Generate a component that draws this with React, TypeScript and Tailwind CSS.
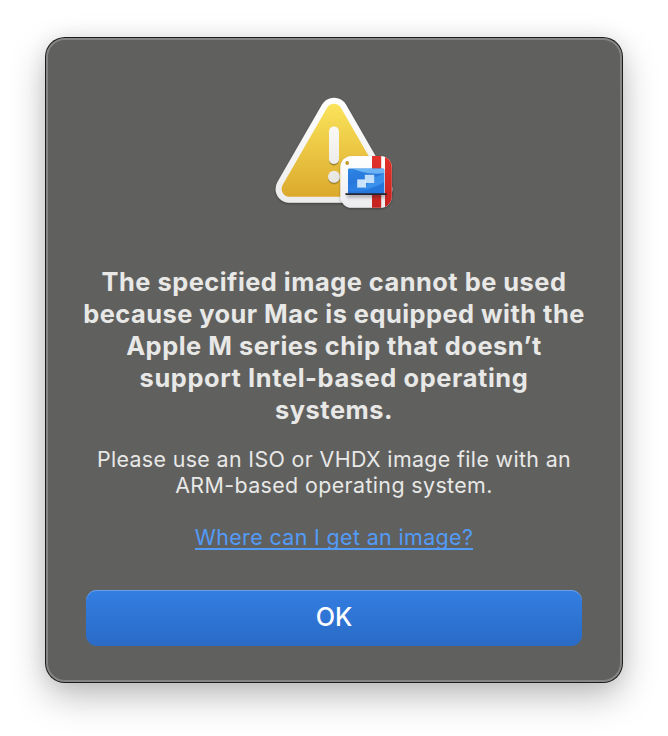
function WarningIcon() {
  return (
    <svg width="128" height="128" viewBox="270 88 128 128" className="block" aria-hidden="true">
      <defs>
        <linearGradient id="yellow" gradientUnits="userSpaceOnUse" x1="0" y1="103" x2="0" y2="197">
          <stop offset="0" stopColor="#fbe45b" />
          <stop offset="1" stopColor="#dba92c" />
        </linearGradient>
        <linearGradient id="rim" gradientUnits="userSpaceOnUse" x1="0" y1="97" x2="0" y2="203">
          <stop offset="0" stopColor="#ffffff" />
          <stop offset="1" stopColor="#ececec" />
        </linearGradient>
        <linearGradient id="mark" gradientUnits="userSpaceOnUse" x1="0" y1="126" x2="0" y2="183">
          <stop offset="0" stopColor="#f9f9f7" />
          <stop offset="1" stopColor="#e8e6e1" />
        </linearGradient>
        <linearGradient id="badge" x1="0" y1="0" x2="0" y2="1">
          <stop offset="0" stopColor="#ffffff" />
          <stop offset="1" stopColor="#ececef" />
        </linearGradient>
        <linearGradient id="red" x1="0" y1="0" x2="0" y2="1">
          <stop offset="0" stopColor="#e2322c" />
          <stop offset="1" stopColor="#c52320" />
        </linearGradient>
        <linearGradient id="screen" x1="0" y1="0" x2="0.4" y2="1">
          <stop offset="0" stopColor="#2f86e6" />
          <stop offset="0.5" stopColor="#2878dc" />
          <stop offset="1" stopColor="#2e86e8" />
        </linearGradient>
        <filter id="soft" x="-20%" y="-20%" width="140%" height="150%">
          <feDropShadow dx="0" dy="1" stdDeviation="1.2" floodColor="#000" floodOpacity="0.35" />
        </filter>
        <filter id="markShadow" x="-50%" y="-20%" width="200%" height="150%">
          <feDropShadow dx="0" dy="1.3" stdDeviation="0.6" floodColor="#7a6420" floodOpacity="0.8" />
        </filter>
        <filter id="blur" x="-20%" y="-50%" width="140%" height="200%">
          <feGaussianBlur stdDeviation="1.8" />
        </filter>
        <clipPath id="badgeClip">
          <rect x="340.3" y="156" width="51.5" height="51.8" rx="11.5" />
        </clipPath>
        <clipPath id="screenClip">
          <rect x="348" y="168.6" width="36.3" height="25.4" rx="1.4" />
        </clipPath>
      </defs>
      <g strokeLinejoin="round">
        <path d="M334 111.5 378.6 189H289.4Z" fill="url(#rim)" stroke="url(#rim)" strokeWidth="27.6" filter="url(#soft)" />
        <path d="M334 111.5 378.6 189H289.4Z" fill="url(#yellow)" stroke="url(#yellow)" strokeWidth="15.6" />
      </g>
      <g fill="url(#mark)" filter="url(#markShadow)">
        <rect x="329" y="126.5" width="10" height="37.5" rx="4.9" />
        <circle cx="334" cy="176.8" r="6" />
      </g>
      <g filter="url(#soft)">
        <rect x="340.3" y="156" width="51.5" height="51.8" rx="11.5" fill="url(#badge)" />
      </g>
      <g clipPath="url(#badgeClip)">
        <rect x="372" y="156" width="9.2" height="52" fill="url(#red)" />
        <rect x="385" y="156" width="8" height="52" fill="url(#red)" />
        <rect x="347" y="193" width="39" height="5" fill="#222" opacity="0.28" filter="url(#blur)" />
      </g>
      <circle cx="347.2" cy="163" r="1.9" fill="#c79a2c" />
      <g clipPath="url(#screenClip)">
        <rect x="348" y="168" width="37" height="26" fill="url(#screen)" />
        <path d="M352 168c8 4 20 7 33 5v-6h-33z" fill="#82c6fa" opacity="0.75" />
        <path d="M370 178q8-1 15-5v8q-8 6-20 8z" fill="#4ba4f4" opacity="0.5" />
        <path d="M348 191c12 2 26-2 37-9v12h-37z" fill="#1c62cd" opacity="0.4" />
      </g>
      <rect x="357.2" y="179.4" width="8.8" height="8.2" fill="#d5ebfd" opacity="0.93" />
      <rect x="364.8" y="174.8" width="9.4" height="8.2" fill="#d5ebfd" opacity="0.88" />
      <path d="M345.3 193.2h41.6v.8q0 1-1 1h-39.6q-1 0-1-1z" fill="#252530" />
    </svg>
  );
}

export default function App() {
  return (
    <main className="flex h-[736px] w-[668px] justify-center bg-white pt-[38px] font-['Inter','Liberation_Sans',sans-serif]">
      <section
        role="alertdialog"
        className="flex h-[644px] w-[576px] flex-col items-center rounded-[19px] border-2 border-[#858583] bg-[#60605e] px-[38px] pt-12 text-[#e8e8e7] shadow-[0_0_0_1px_#1c1c1c,0_14px_36px_rgba(0,0,0,0.27),0_0_20px_rgba(0,0,0,0.08)]"
      >
        <WarningIcon />
        <h1 className="mt-[50px] flex flex-col items-center text-[25.4px] leading-8 font-bold whitespace-nowrap">
          <span className="tracking-[0.49px]">The specified image cannot be used</span>
          <span className="tracking-[0.47px]">because your Mac is equipped with the</span>
          <span className="tracking-[0.52px]">Apple M series chip that doesn’t</span>
          <span className="tracking-[0.6px]">support Intel-based operating</span>
          <span className="tracking-[0.55px]">systems.</span>
        </h1>
        <p className="mt-5 flex flex-col items-center text-[21.4px] leading-[26px] whitespace-nowrap">
          <span className="tracking-[0.36px]">Please use an ISO or VHDX image file with an</span>
          <span className="tracking-[0.39px]">ARM-based operating system.</span>
        </p>
        <a className="mt-[26px] h-[26px] border-b-2 border-[#539bf8] text-[21.4px] leading-[27px] tracking-[0.38px] whitespace-nowrap text-[#539bf8]">
          Where can I get an image?
        </a>
        <button className="mt-10 h-14 w-[496px] rounded-[11px] bg-linear-to-b from-[#337ee2] to-[#2a6bc6] text-[25.2px] font-medium text-white shadow-[inset_0_1px_0_#68a0ea]">
          OK
        </button>
      </section>
    </main>
  );
}
